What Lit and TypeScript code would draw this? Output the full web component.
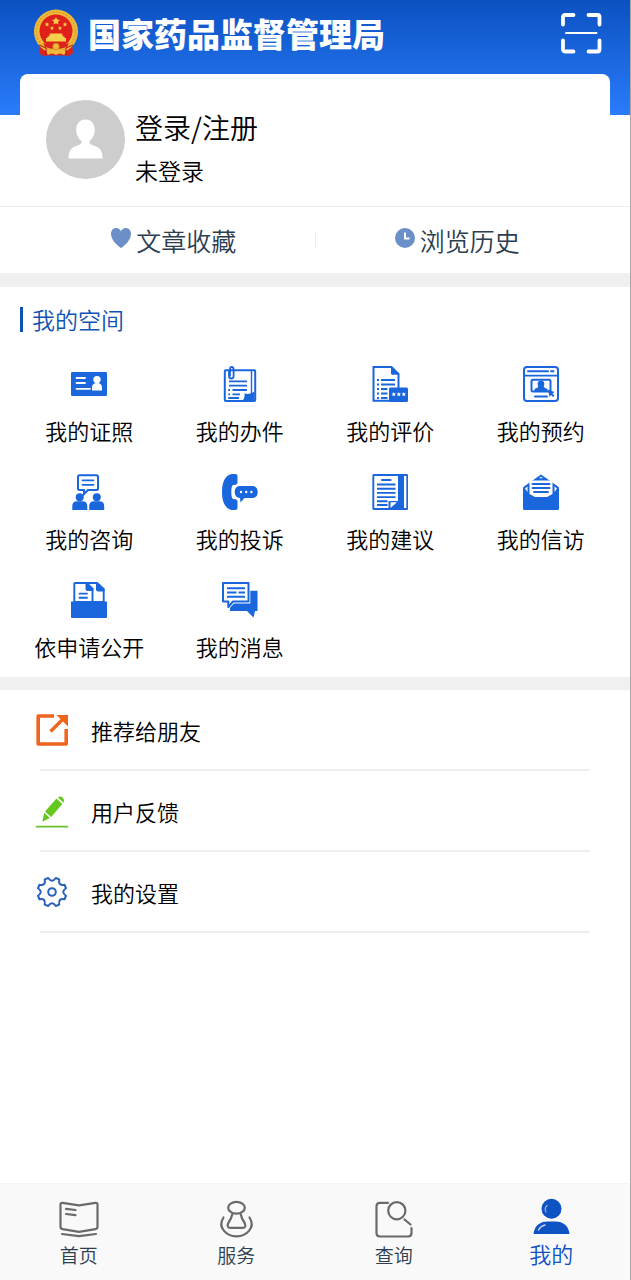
import { LitElement, html, css, svg, SVGTemplateResult } from "lit";
import { customElement, property, state } from "lit/decorators.js";

const BLUE = "#1a66dc";

const icons: Record<string, SVGTemplateResult> = {
  license: svg`
    <rect y="6" width="36" height="24" rx="1.2" fill=${BLUE} />
    <path d="M5.500 12H14M5.500 17H14M5.500 22.800H19" stroke="#fff" stroke-width="1.800" stroke-linecap="round" />
    <circle cx="26" cy="13.600" r="3.700" fill="#fff" />
    <path d="M21 24.500V21.500Q21 17 26 17T31 21.500V24.500Z" fill="#fff" />`,
  errand: svg`
    <rect x="2.800" y="4.200" width="30.400" height="30.800" rx="1" fill="#fff" stroke=${BLUE} stroke-width="2" />
    <path d="M29.500 5V30" stroke=${BLUE} stroke-width="1.400" />
    <path d="M7 15.300H25M7 19.700H25M10.500 24H25M10.500 28.300H18M6.300 24H8M6.300 28.300H8M6.300 32H17" stroke=${BLUE} stroke-width="1.800" />
    <path d="M32.500 25.500V34.500H20.500Q23 32 22.500 27.500Q28 29 32.500 25.500Z" fill=${BLUE} />
    <path d="M7 4.500V10Q7 12.500 9.300 12.500T11.600 10V3.500Q11.600 1 9.800 1T8 3V9.500" fill="none" stroke=${BLUE} stroke-width="1.800" stroke-linecap="round" />`,
  review: svg`
    <path d="M1.500 1H19.500L26.500 8V34.800H1.500Z" fill="#fff" stroke=${BLUE} stroke-width="2" />
    <path d="M19 1L27.300 8.800H20.500Q19 8.800 19 7.200Z" fill=${BLUE} />
    <path d="M5 14H7M9 14H23M5 18.500H7M9 18.500H23M5 23H7M9 23H15.500M5 27.500H7M9 27.500H15.500M5 32H7M9 32H15.500" stroke=${BLUE} stroke-width="1.800" />
    <rect x="17" y="21.500" width="19" height="14.500" rx="1.500" fill=${BLUE} />
    <path d="M21.800 26l.7 1.400 1.500.2-1.100 1 .3 1.500-1.400-.7-1.400.7.3-1.500-1.100-1 1.500-.2zM26.800 26l.7 1.400 1.500.2-1.100 1 .3 1.500-1.400-.7-1.400.7.3-1.500-1.100-1 1.500-.2zM31.800 26l.7 1.400 1.500.2-1.100 1 .3 1.500-1.400-.7-1.400.7.3-1.500-1.100-1 1.500-.2z" fill="#fff" />`,
  booking: svg`
    <rect x="1" y="1" width="34" height="34" rx="3" fill="#fff" stroke=${BLUE} stroke-width="2" />
    <path d="M5 5.300H25M28 5.300H30.500" stroke=${BLUE} stroke-width="2" stroke-linecap="round" />
    <path d="M1 9.600H35" stroke=${BLUE} stroke-width="1.800" />
    <rect x="8.500" y="13.800" width="19" height="11.700" rx="1.500" fill="none" stroke=${BLUE} stroke-width="2" />
    <path d="M18 14.800C20.900 14.800 21.800 16.800 21.200 19C20.800 20.500 20.500 21 21.300 21.500L24.500 23V26H11.500V23L14.700 21.500C15.500 21 15.200 20.500 14.800 19C14.200 16.800 15.100 14.800 18 14.800Z" fill=${BLUE} />
    <path d="M12 30.600H24" stroke=${BLUE} stroke-width="2" stroke-linecap="round" />
    <path d="M25 23.500L31.500 26L29.500 27.500L31.500 29.800L30 31L28 29L26.500 31Z" fill=${BLUE} />`,
  consult: svg`
    <path d="M8.500 1.200H25.500Q27 1.200 27 2.700V14.500Q27 16 25.500 16H17L13 20V16H8.500Q7 16 7 14.500V2.700Q7 1.200 8.500 1.200Z" fill="#fff" stroke=${BLUE} stroke-width="2" />
    <path d="M11.500 6.300H22.500M11.500 10.800H22.500" stroke=${BLUE} stroke-width="1.800" stroke-linecap="round" />
    <circle cx="8.700" cy="23.200" r="4" fill=${BLUE} />
    <circle cx="25.800" cy="23.200" r="4" fill=${BLUE} />
    <path d="M1.300 36V32Q1.300 27.200 6 27.200H11.500Q16.300 27.200 16.300 32V36ZM18.200 36V32Q18.200 27.200 23 27.200H28.500Q33.200 27.200 33.200 32V36Z" fill=${BLUE} />`,
  complaint: svg`
    <path d="M9.500 0H13.500Q15.500 0 15.500 2V8.500Q15.500 10.500 13.500 10.700L11 11Q9.300 12 9.300 18T11 25L13.500 25.300Q15.500 25.500 15.500 27.500V34Q15.500 36 13.500 36H9.500Q0 33.500 0 18T9.500 0Z" fill=${BLUE} />
    <path d="M17.500 12H31Q35.700 12.500 35.700 18T31 24H22.500L18.500 28.500L18 24Q12.700 23.500 12.700 18T17.500 12Z" fill=${BLUE} />
    <g fill="#fff"><circle cx="19" cy="18" r="1.200" /><circle cx="24.200" cy="18" r="1.200" /><circle cx="29.400" cy="18" r="1.200" /></g>`,
  suggest: svg`
    <rect x="1.300" y="1" width="34" height="34" rx=".5" fill="#fff" stroke=${BLUE} stroke-width="1.900" />
    <path d="M26 1H32V35H16.500V27H26Z" fill=${BLUE} />
    <path d="M18.500 34V28.300H25Z" fill="#fff" />
    <path d="M10 6H18.500" stroke=${BLUE} stroke-width="2.200" stroke-linecap="round" />
    <path d="M5 10.500H23.500M5 14.700H23.500M5 18.900H23.500M5 23.100H23.500M5 27.300H15.500M5 31H15.500" stroke=${BLUE} stroke-width="1.900" />`,
  petition: svg`
    <path d="M1 12.500L18 .5L35 12.500Q36 13 36 14V34.500Q36 36 34.500 36H1.500Q0 36 0 34.500V14Q0 13 1 12.500Z" fill=${BLUE} />
    <path d="M6.500 6.500H29.500V20L24 23H12L6.500 20ZM2 14.500L4.500 12.500V18ZM34 14.500L31.500 12.500V18Z" fill="#fff" />
    <path d="M16 4.300L18 2.800L20 4.300Z" fill="#fff" />
    <path d="M9.500 10H26.500M9.500 14H26.500M11 18H25" stroke=${BLUE} stroke-width="1.900" stroke-linecap="round" />`,
  disclosure: svg`
    <path d="M13 20V1H26L32.700 7V20Z" fill="#fff" stroke=${BLUE} stroke-width="1.900" />
    <path d="M25 1H27L33.500 7V9.500H27Q25 9.500 25 7.500Z" fill=${BLUE} />
    <path d="M3.300 20V2Q3.300 1 4.300 1H15.500L21.500 7V20Z" fill="#fff" stroke=${BLUE} stroke-width="1.900" />
    <path d="M14.500 1H17L22.400 6.500V9H16.500Q14.500 9 14.500 7Z" fill=${BLUE} />
    <path d="M8.500 11.600H16M8.500 15.700H16" stroke=${BLUE} stroke-width="1.900" stroke-linecap="round" />
    <path d="M0 19.500H36V35Q36 36 35 36H1Q0 36 0 35Z" fill=${BLUE} />`,
  message: svg`
    <path d="M8 8.700H35.500V29H33L31.500 35.500L25 29H8Z" fill=${BLUE} />
    <path d="M1 1H28.300V21.500H12L6.300 27.500V20.300H1Z" fill="#fff" />
    <path d="M1 1H26.500V19.500H11L6.300 25V19.500H1Z" fill="#fff" stroke=${BLUE} stroke-width="2" stroke-linejoin="round" />
    <path d="M5 6.300H23M5 10.500H14.500M16.500 10.500H23M5 14.700H23" stroke=${BLUE} stroke-width="1.900" />`,
  share: svg`
    <path d="M20 4H4.200V32H32.200V17" fill="none" stroke="#f0641e" stroke-width="3.600" stroke-linejoin="round" />
    <path d="M16.500 19.500L29 7" stroke="#f0641e" stroke-width="3.400" />
    <path d="M22.500 3H34V14.500Z" fill="#f0641e" />`,
  feedback: svg`
    <path d="M2.500 33.700H33.500" stroke="#69c22d" stroke-width="1.700" stroke-linecap="round" />
    <path d="M22.500 5.500L28.300 11L17.200 24L11 18.500ZM10.200 19.700L15.800 25L9 28.500Q8.300 28.500 8.600 27.500ZM23.800 4.300Q26 2.500 28.500 4.500Q31 7 29.400 9.700Z" fill="#64c81e" />`,
  settings: svg`
    <path d="M14.250 4Q18 9.500 21.750 4L25.250 5.450Q24 12 30.550 10.750L32 14.250Q26.500 18 32 21.750L30.550 25.250Q24 24 25.250 30.550L21.750 32Q18 26.500 14.250 32L10.750 30.550Q12 24 5.450 25.250L4 21.750Q9.500 18 4 14.250L5.450 10.750Q12 12 10.750 5.450Z" fill="none" stroke="#2a5fba" stroke-width="2" stroke-linejoin="round" />
    <circle cx="18" cy="18" r="3.800" fill="none" stroke="#2a5fba" stroke-width="2" />`,
  home: svg`
    <path d="M3.500 4.800L20 7.300L36.500 4.800Q38.500 4.600 38.500 6.300V28.800Q38.500 30.800 36.500 31.100L20 33.800L3.500 31.100Q1.500 30.800 1.500 28.800V6.300Q1.500 4.600 3.500 4.800ZM3 36L20 38.200L37 36" fill="none" stroke="#6a6a6a" stroke-width="2.200" stroke-linecap="round" stroke-linejoin="round" />
    <path d="M7 10.800L16.500 12M7 16L16.500 17.200" stroke="#6a6a6a" stroke-width="2.200" stroke-linecap="round" />`,
  service: svg`
    <ellipse cx="20.500" cy="9.800" rx="8.300" ry="5.900" fill="none" stroke="#6a6a6a" stroke-width="2.200" />
    <path d="M16.500 15.500Q15.500 20.500 12.300 25Q10.300 29.800 14.500 29.800H26.500Q30.700 29.800 28.700 25Q25.500 20.500 24.500 15.500" fill="none" stroke="#6a6a6a" stroke-width="2.200" />
    <path d="M7.500 19.500C1 29.500 10.500 38.300 20.500 38.300S40 29.500 33.500 19.500" fill="none" stroke="#6a6a6a" stroke-width="2.200" stroke-linecap="round" />`,
  search: svg`
    <path d="M14 4.800H6Q2.500 4.800 2.500 8.300V35Q2.500 38.500 6 38.500H34Q37.500 38.500 37.500 35V30" fill="none" stroke="#6a6a6a" stroke-width="2.200" stroke-linecap="round" />
    <circle cx="22.800" cy="12.700" r="8.600" fill="none" stroke="#6a6a6a" stroke-width="2.200" />
    <path d="M30.500 21.500L36.500 26.500" stroke="#6a6a6a" stroke-width="2.200" stroke-linecap="round" />`,
  mine: svg`
    <circle cx="20.500" cy="10.800" r="10" fill="#0f52c3" />
    <path d="M2.500 36C3.500 26.500 10.500 23.500 16.500 23.500H24.500C30.500 23.500 37.500 26.500 38.500 36Z" fill="#0f52c3" />
    <path d="M15 14Q13 10.500 16 7.500" fill="none" stroke="#9db9ea" stroke-width="1.200" stroke-linecap="round" />
    <path d="M7.500 32Q9.500 28 14 27" fill="none" stroke="#c4d5f2" stroke-width="1.500" stroke-linecap="round" />`,
};

const drawIcon = (name: string, box = 36) =>
  html`<svg class="icon" viewBox="0 0 ${box} ${box}" aria-hidden="true">${icons[name]}</svg>`;

const emblem = html`
  <svg class="emblem" viewBox="0 0 46 48" aria-hidden="true">
    <path d="M7 33L6 44Q9 48 14 46.500H32Q37 48 40 44L39 33Z" fill="#d8241c" />
    <circle cx="23" cy="22.500" r="22" fill="#f0b93a" />
    <circle cx="23" cy="22.500" r="19.500" fill="none" stroke="#d89a28" stroke-width="1.200" stroke-dasharray="2 1.500" />
    <circle cx="23" cy="22" r="16.500" fill="#e0201b" />
    <path d="M23 8l1.200 2.600 2.900.3-2.200 1.900.7 2.800L23 14.200l-2.600 1.400.7-2.800-2.200-1.900 2.900-.3z" fill="#f6d04a" />
    <g fill="#f6d04a">
      <path d="M14 13l.7 1.500 1.600.2-1.200 1.100.3 1.600-1.400-.8-1.400.8.3-1.600-1.200-1.100 1.600-.2zM32 13l.7 1.500 1.600.2-1.200 1.100.3 1.600-1.400-.8-1.400.8.3-1.600-1.200-1.100 1.600-.2z" />
      <path d="M19 17l.6 1.300 1.400.2-1 1 .2 1.400-1.200-.7-1.200.7.2-1.400-1-1 1.400-.2zM27 17l.6 1.300 1.400.2-1 1 .2 1.400-1.200-.7-1.200.7.2-1.400-1-1 1.400-.2z" />
      <path d="M17 24.500H29L30 27.500H31.500V29H33V32.500H13V29H14.500V27.500H16Z" />
    </g>
    <path d="M10 34Q23 40 36 34L34 38Q23 42 12 38Z" fill="#d8241c" />
    <path d="M13 43Q18 40 20 42L23 39L26 42Q28 40 33 43L31 46Q27 43 23 46Q19 43 15 46Z" fill="#f0b93a" />
    <path d="M6 36L13 39V46M40 36L33 39V46" fill="none" stroke="#b51812" stroke-width="1" />
    <circle cx="23" cy="37.500" r="3.200" fill="#f0b93a" stroke="#c98a1e" stroke-width=".8" />
  </svg>`;

interface Entry {
  icon: string;
  label: string;
}

const SPACE: Entry[] = [
  { icon: "license", label: "我的证照" },
  { icon: "errand", label: "我的办件" },
  { icon: "review", label: "我的评价" },
  { icon: "booking", label: "我的预约" },
  { icon: "consult", label: "我的咨询" },
  { icon: "complaint", label: "我的投诉" },
  { icon: "suggest", label: "我的建议" },
  { icon: "petition", label: "我的信访" },
  { icon: "disclosure", label: "依申请公开" },
  { icon: "message", label: "我的消息" },
];

const OPTIONS: Entry[] = [
  { icon: "share", label: "推荐给朋友" },
  { icon: "feedback", label: "用户反馈" },
  { icon: "settings", label: "我的设置" },
];

const TABS: Entry[] = [
  { icon: "home", label: "首页" },
  { icon: "service", label: "服务" },
  { icon: "search", label: "查询" },
  { icon: "mine", label: "我的" },
];

const reset = css`
  * {
    box-sizing: border-box;
  }
  a {
    color: inherit;
    text-decoration: none;
  }
  svg {
    display: block;
    flex: none;
  }
  ul {
    list-style: none;
    margin: 0;
    padding: 0;
  }
`;

@customElement("tab-bar")
export class TabBar extends LitElement {
  @property() current = "mine";

  static styles = [
    reset,
    css`
      :host {
        display: block;
      }
      .tabs {
        display: grid;
        grid-template-columns: repeat(4, 1fr);
        background: #f9f9f9;
        border-top: 1px solid #f4f4f4;
        padding: 14px 0 8px;
      }
      .tab {
        display: flex;
        flex-direction: column;
        align-items: center;
        font-size: 19px;
        line-height: 34px;
        color: #2c3e50;
      }
      .icon {
        width: 40px;
        height: 40px;
      }
      .active {
        font-size: 22px;
        line-height: 30px;
        color: #0f52c3;
      }
    `,
  ];

  render() {
    return html`<nav class="tabs">
      ${TABS.map(
        (t) => html`<a href="#${t.icon}" class="tab ${t.icon === this.current ? "active" : ""}">
          ${drawIcon(t.icon, 40)}<span>${t.label}</span>
        </a>`
      )}
    </nav>`;
  }
}

@customElement("app-root")
export class AppRoot extends LitElement {
  @state() private tab = "mine";

  static styles = [
    reset,
    css`
      :host {
        display: flex;
        flex-direction: column;
        min-height: 100vh;
        box-sizing: border-box;
        border-right: 1px solid #a8a8a8;
        background: #fff;
        color: #000;
        font-family: "Noto Sans CJK SC", sans-serif;
        font-weight: 350;
      }
      .top {
        background: linear-gradient(#0b51c1, #2a7cfb) 0 0 / 100% 115px no-repeat;
        border-bottom: 1px solid #ebebeb;
      }
      .bar {
        display: flex;
        align-items: center;
        height: 74px;
        padding: 0 28px 8px 33px;
      }
      .emblem {
        width: 46px;
        height: 48px;
      }
      .name {
        flex: 1;
        margin: 0 0 0 9px;
        font-size: 33px;
        line-height: 48px;
        font-weight: 900;
        color: #fff;
      }
      .scan {
        border: 0;
        padding: 0;
        background: none;
      }
      .scan svg {
        width: 42px;
        height: 42px;
      }
      .card {
        display: flex;
        gap: 9px;
        margin: 0 20px;
        padding: 26px 26px 24px;
        background: #fff;
        border-radius: 8px 8px 0 0;
      }
      .avatar {
        width: 80px;
        height: 80px;
      }
      .who {
        display: flex;
        flex-direction: column;
        gap: 4px;
      }
      .login {
        font-size: 28px;
        line-height: 54px;
      }
      .status {
        font-size: 23px;
        line-height: 24px;
      }
      .quick {
        display: grid;
        grid-template-columns: 1fr 1px 1fr;
        align-items: center;
        height: 66px;
        font-size: 25px;
        color: #2c3e50;
      }
      .quick a {
        display: flex;
        align-items: center;
        justify-content: center;
        gap: 4px;
        padding-left: 32px;
      }
      .quick a:last-child {
        padding: 0 32px 0 0;
      }
      .quick svg {
        width: 22px;
        height: 22px;
        margin-bottom: 4px;
      }
      .rule {
        height: 14px;
        background: #ececec;
      }
      .space {
        border-top: 14px solid #f0f0f0;
        border-bottom: 13px solid #f0f0f0;
        padding-bottom: 6px;
      }
      .heading {
        display: flex;
        align-items: center;
        gap: 9px;
        margin: 0;
        padding: 15px 20px 11px;
        font-size: 23px;
        line-height: 34px;
        font-weight: inherit;
        color: #0f52b5;
      }
      .heading::before {
        content: "";
        width: 3px;
        height: 25px;
        background: #0f52b5;
      }
      .grid {
        display: grid;
        grid-template-columns: repeat(4, 1fr);
        padding: 0 14px;
      }
      .cell {
        display: flex;
        flex-direction: column;
        align-items: center;
        gap: 10px;
        padding: 19px 0 7px;
        font-size: 22px;
        line-height: 36px;
        white-space: nowrap;
      }
      .icon {
        width: 36px;
        height: 36px;
      }
      .options {
        padding: 0 40px;
      }
      .option {
        display: flex;
        align-items: center;
        gap: 21px;
        height: 81px;
        border-bottom: 2px solid #eee;
        font-size: 22px;
      }
      .option .icon {
        margin-left: -6px;
      }
      tab-bar {
        margin-top: auto;
      }
    `,
  ];

  render() {
    return html`
      <header class="top">
        <div class="bar">
          ${emblem}
          <h1 class="name">国家药品监督管理局</h1>
          <button class="scan" type="button" aria-label="扫一扫">
            <svg viewBox="0 0 42 42" fill="none" stroke="#fff" stroke-linecap="round">
              <path d="M3 12.500V5Q3 3 5 3H13.500M28.500 3H37.500Q39.500 3 39.500 5V12.500M39.500 28.500V37.500Q39.500 39.500 37.500 39.500H28.500M13.500 39.500H5Q3 39.500 3 37.500V28.500" stroke-width="3.800" />
              <path d="M6 21H36.500" stroke-width="2" />
            </svg>
          </button>
        </div>
        <a class="card" href="#login">
          <svg class="avatar" viewBox="0 0 80 80" aria-hidden="true">
            <circle cx="39.500" cy="39.500" r="39.500" fill="#cdcdcd" />
            <path d="M39.500 19.500C45.500 19.500 48.800 24 48.800 30C48.800 35.500 46 39 43.500 41C43 43.500 44.500 44.500 47.500 45.500C53.500 47.500 56.500 50 56.500 58.500H22.500C22.500 50 25.500 47.500 31.500 45.500C34.500 44.500 36 43.500 35.500 41C33 39 30.200 35.500 30.200 30C30.200 24 33.500 19.500 39.500 19.500Z" fill="#fff" />
          </svg>
          <div class="who">
            <span class="login">登录/注册</span>
            <span class="status">未登录</span>
          </div>
        </a>
      </header>
      <nav class="quick">
        <a href="#favorites">
          <svg viewBox="0 0 22 22" aria-hidden="true">
            <path d="M11 21C7 18.500 1 12.500 1 7C1 3 3.500 1 6.200 1C8.500 1 10.200 2.300 11 4.200C11.800 2.300 13.500 1 15.800 1C18.500 1 21 3 21 7C21 12.500 15 18.500 11 21Z" fill="#6b8fc9" />
          </svg>
          文章收藏
        </a>
        <span class="rule"></span>
        <a href="#history">
          <svg viewBox="0 0 22 22" aria-hidden="true">
            <circle cx="11" cy="11" r="10" fill="#6b8fc9" />
            <path d="M11 5.500V11.500H15.500" fill="none" stroke="#fff" stroke-width="2" />
          </svg>
          浏览历史
        </a>
      </nav>
      <section class="space">
        <h2 class="heading">我的空间</h2>
        <div class="grid">
          ${SPACE.map((e) => html`<a class="cell" href="#${e.icon}">${drawIcon(e.icon)}<span>${e.label}</span></a>`)}
        </div>
      </section>
      <ul class="options">
        ${OPTIONS.map((e) => html`<li><a class="option" href="#${e.icon}">${drawIcon(e.icon)}<span>${e.label}</span></a></li>`)}
      </ul>
      <tab-bar .current=${this.tab}></tab-bar>
    `;
  }
}
